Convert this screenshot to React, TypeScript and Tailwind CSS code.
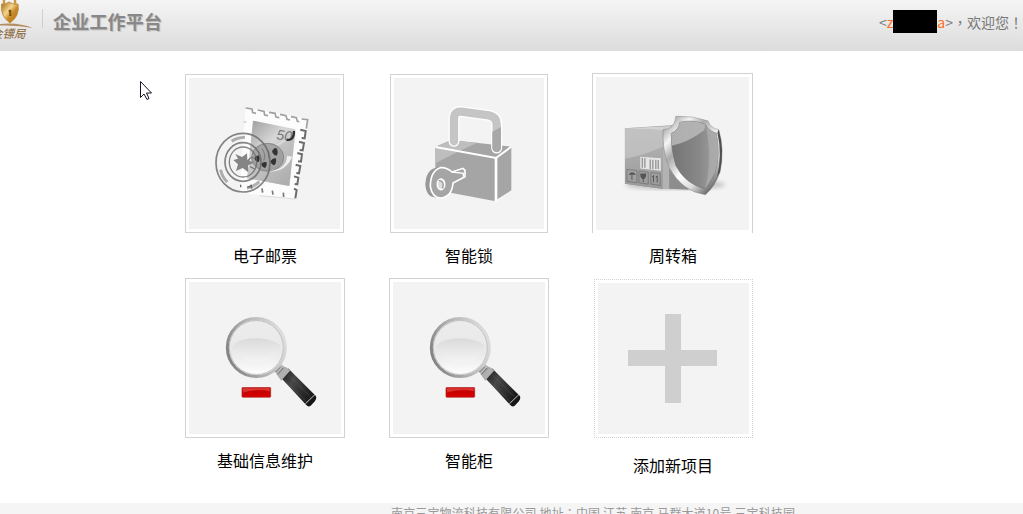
import React from "react";

const Stamp = () => (
  <svg viewBox="0 0 453 453" className="block h-full w-full">
    <defs>
      <linearGradient id="stampFill" x1="0" y1="0" x2=".7" y2="1">
        <stop offset="0" stopColor="#999" />
        <stop offset=".45" stopColor="#d8d8d8" />
        <stop offset="1" stopColor="#a2a2a2" />
      </linearGradient>
    </defs>
    <g transform="translate(-28,-29)">
      <path d="M198 117L386 153L350 392L180 374Z" fill="#fcfcfc" />
      <path d="M198 119l19 3 2 11 10 2M234 125l19 4 2 11 10 2M268 132l18 3 3 11 10 2M301 138l18 4 3 11 9 2M334 145l16 3 3 11 6 1M366 152l18 2-4 27" fill="none" stroke="#a0a0a0" strokeWidth="5" />
      <path d="M192 161h8" stroke="#c5c5c5" strokeWidth="4" />
      <path d="M362 184l16 4-3 22-9-1M358 220l15 4-4 22-9-1M353 254l14 4-3 22-9-1M348 289l14 4-4 22-8-1M343 324l13 4-3 20-8-1M343 361l8 4-4 25" fill="none" stroke="#6c6c6c" strokeWidth="6" />
      <path d="M240 382l107 10" stroke="#cfcfcf" strokeWidth="2" />
      <path d="M247 360l2 13M278 367l2 12M311 373l1 13M214 349l2 12" stroke="#777" strokeWidth="5" />
      <path d="M220 157L347 183L329 353L202 330Z" fill="url(#stampFill)" />
      <path d="M215 270q50 0 133-76l-19 159-127-23Z" fill="#bcbcbc" opacity=".5" />
      <path d="M265 240Q305 230 346 193" fill="none" stroke="#eee" strokeWidth="2" />
      <text x="289" y="213" transform="rotate(7 289 213)" fontFamily="Liberation Sans" fontStyle="italic" fontSize="42" fill="#777">50</text>
      <path d="M321 214q22 4 22-26" fill="none" stroke="#303030" strokeWidth="7" />
      <ellipse cx="264" cy="267" rx="48" ry="42" fill="#999" opacity=".8" />
      <ellipse cx="264" cy="267" rx="48" ry="42" fill="none" stroke="#888" strokeWidth="3" />
      <path d="M322 262q0 42-59 47 54 4 75-44Z" fill="#f0f0f0" />
      <g fill="#333"><path d="M277 250q3-10 13-11 7 10 2 22-7 3-15-11zM272 279q5-9 16-10 4 11-3 21-8 2-13-11zM245 288q4-9 15-7 4 9-4 18-8-1-11-11zM224 269q6-8 13-8 6 10 0 20-9 1-13-12z" /></g>
      <path d="M247 241q13 18 5 36M263 245q8 9 4 24" fill="none" stroke="#777" strokeWidth="3" />
      <g fill="none" stroke="#666">
        <ellipse cx="190" cy="283" rx="81" ry="88" strokeWidth="5" opacity=".8" />
        <ellipse cx="190" cy="281" rx="54" ry="58" strokeWidth="5" opacity=".8" />
        <ellipse cx="190" cy="281" rx="41" ry="45" strokeWidth="4" opacity=".8" />
        <path d="M156 219q16-11 40-12M123 304q4 22 20 37M202 359q21-3 37-19" strokeWidth="9" opacity=".5" />
        <path d="M203 357l12-4M183 349v8" strokeWidth="4" />
      </g>
      <path d="M167 257l20 9 15-11 1 19 20 9-18 8 1 21-17-13-20 9 6-20-14-13 14-4Z" fill="#858585" />
      <path d="M204 278q10-14 18-10M211 295l14 7" fill="none" stroke="#777" strokeWidth="4" />
    </g>
  </svg>
);

const Lock = () => (
  <svg viewBox="0 0 450 453" className="block h-full w-full">
    <g transform="translate(-30,-29)">
      <path d="M154 235L202 215L382 235V366L331 398L200 373L154 340Z" fill="#a5a5a5" />
      <path d="M154 236L202 217L280 223Q230 245 154 285Z" fill="#bebebe" />
      <path d="M154 236L336 269L382 235" fill="none" stroke="#fff" strokeWidth="6" />
      <path d="M336 269V399" stroke="#fff" strokeWidth="8" />
      <path d="M210 219V149Q212 128 232 130L315 141Q338 146 338 168V239" fill="none" stroke="#fff" strokeWidth="33" strokeLinecap="round" />
      <path d="M210 219V149Q212 128 232 130L315 141Q338 146 338 168V239" fill="none" stroke="#c5c5c5" strokeWidth="25" strokeLinecap="round" />
      <path d="M325 190L351 176V238A13 13 0 0 1 325 238Z" fill="#a8a8a8" />
      <path d="M164 297Q126 300 124 348Q126 388 158 388" fill="#989898" />
      <path d="M169 298Q187 296 204 311L237 300L243 306V325L207 344Q204 384 171 389Q145 390 139 355Q139 308 169 298Z" fill="#a5a5a5" stroke="#fff" strokeWidth="5" />
      <ellipse cx="171" cy="348" rx="11" ry="16" fill="#ddd" stroke="#fff" strokeWidth="5" />
      <path d="M164 336q19 3 12 25" fill="none" stroke="#999" strokeWidth="4" />
      <path d="M204 311l34 4v10" stroke="#fff" strokeWidth="4" fill="none" />
    </g>
  </svg>
);

const ShieldBox = () => (
  <svg viewBox="0 0 460 460" className="block h-full w-full">
    <defs>
      <linearGradient id="boxFace" x2="0" y2="1"><stop stopColor="#b8b8b8" /><stop offset="1" stopColor="#999" /></linearGradient>
      <linearGradient id="rim" x2=".8" y2="1"><stop stopColor="#777" /><stop offset=".24" stopColor="#f5f5f5" /><stop offset=".38" stopColor="#aaa" /><stop offset=".6" stopColor="#fff" /><stop offset=".78" stopColor="#ddd" /><stop offset="1" stopColor="#555" /></linearGradient>
      <linearGradient id="shieldFace" x2="1"><stop stopColor="#747474" /><stop offset=".6" stopColor="#888" /><stop offset="1" stopColor="#a3a3a3" /></linearGradient>
      <filter id="soft"><feGaussianBlur stdDeviation="6" /></filter>
    </defs>
    <g transform="translate(-30,-26)">
      <ellipse cx="268" cy="350" rx="150" ry="15" fill="#777" opacity=".4" filter="url(#soft)" />
      <path d="M117 180L260 171L290 363L235 363L117 347Z" fill="#989898" />
      <path d="M117 180L231 186V363L117 347Z" fill="url(#boxFace)" />
      <path d="M117 180L231 186V235Q180 260 117 272Z" fill="#c6c6c6" opacity=".7" />
      <path d="M117 180L255 173L262 180L231 186Z" fill="#d2d2d2" />
      <path d="M231 186L270 180V363L231 363Z" fill="#b3b3b3" />
      <path d="M250 290L310 365L250 362Z" fill="#8d8d8d" />
      <path d="M163 266L225 270V308L163 301Z" fill="#e6e6e6" />
      <path d="M169 269v30M177 270v29M193 274v29M201 275v28M210 275v28M217 276v27" stroke="#777" strokeWidth="3" />
      <g fill="none" stroke="#696969" strokeWidth="2"><path d="M123 304l30 3v37l-30-4zM159 309l28 3v36l-28-4zM195 313l28 3v36l-28-4z" /></g>
      <path d="M128 320q10-15 22 0zM163 316h18q0 17-9 17-9 0-9-17z" fill="#555" />
      <path d="M138 320v15M172 330v12M203 342v-20l-4 5M214 343v-20l-4 5" stroke="#555" strokeWidth="3" fill="none" />
      <path d="M270 144Q320 142 367 158Q375 181 399 184Q417 245 403 311Q389 354 359 380Q290 371 250 299Q228 245 232 184Q267 183 270 144Z" fill="url(#rim)" stroke="#888" strokeWidth="1.5" />
      <path d="M399 184Q417 245 403 311L394 327Q410 260 395 193Z" fill="#505050" />
      <path d="M282 162Q324 153 359 169Q369 190 392 195Q405 263 387 315Q374 348 358 362Q299 348 270 292Q255 244 256 195Q278 188 282 162Z" fill="url(#shieldFace)" stroke="#777" strokeWidth="2" />
      <path d="M282 162Q324 153 359 169L356 185Q310 221 258 233L256 195Q278 188 282 162Z" fill="#bababa" opacity=".85" />
      <path d="M359 169Q369 190 392 195Q405 263 387 315L358 362Q382 270 359 169Z" fill="#b0b0b0" opacity=".65" />
    </g>
  </svg>
);

const Magnifier = () => (
  <svg viewBox="0 0 456 453" className="block h-full w-full">
    <defs>
      <linearGradient id="lensRim" x1="0" y1=".7" x2="1" y2=".35"><stop stopColor="#808080" /><stop offset=".45" stopColor="#b0b0b0" /><stop offset="1" stopColor="#dedede" /></linearGradient>
      <linearGradient id="lens" x2="0" y2="1"><stop stopColor="#ececec" /><stop offset=".6" stopColor="#e9e9e9" /><stop offset="1" stopColor="#fff" /></linearGradient>
      <linearGradient id="glare" x2="0" y2="1"><stop stopColor="#dadada" /><stop offset="1" stopColor="#f5f5f5" /></linearGradient>
      <linearGradient id="handle" x2="1" y2=".6"><stop stopColor="#111" /><stop offset=".4" stopColor="#484848" /><stop offset="1" stopColor="#161616" /></linearGradient>
      <linearGradient id="red" x2="0" y2="1"><stop stopColor="#d6231f" /><stop offset=".45" stopColor="#c60000" /><stop offset="1" stopColor="#d00" /></linearGradient>
    </defs>
    <g transform="translate(-27,-30)">
      <path d="M281 293l20-20 26 20-25 27z" fill="#b8b8b8" />
      <path d="M286 299l15-15M292 306l18-20" stroke="#666" strokeWidth="3" />
      <circle cx="229" cy="225" r="87" fill="url(#lens)" stroke="url(#lensRim)" strokeWidth="9" />
      <circle cx="229" cy="225" r="81" fill="none" stroke="#aaa" strokeWidth="2" />
      <path d="M155 222Q175 197 229 197Q285 199 303 222Q294 262 229 270Q163 260 155 222Z" fill="url(#glare)" />
      <path d="M300 313L325 288L407 370Q412 377 404 387L392 400Q385 405 378 397Z" fill="url(#handle)" />
      <path d="M294 309L316 284L331 293L304 324Z" fill="#b0b0b0" stroke="#888" strokeWidth="1" />
      <path d="M314 323l66 66M327 309l68 68" stroke="#777" strokeWidth="2" strokeDasharray="2 3" />
      <path d="M376 394l29-28" stroke="#c8c8c8" strokeWidth="3" />
      <rect x="186" y="345" width="86" height="29" rx="2" fill="url(#red)" stroke="#a5201c" strokeWidth="2" />
      <path d="M189 348h80v8q-40-10-80 5z" fill="#ef6864" opacity=".4" />
    </g>
  </svg>
);

const Plus = () => (
  <svg viewBox="0 0 151 151" className="block h-full w-full">
    <path d="M67 31h16v36h36v16H83v37H67V83H30V67h37z" fill="#cfcfcf" />
  </svg>
);

type Tile = { label: string; icon: React.ReactNode; cell: string; frame: string; text: string };

const tiles: Tile[] = [
  { label: "电子邮票", icon: <Stamp />, cell: "pt-[1px]", frame: "ml-[22px] h-[159px] w-[159px] border", text: "mt-[10px]" },
  { label: "智能锁", icon: <Lock />, cell: "pt-[1px]", frame: "ml-[23px] h-[159px] w-[158px] border", text: "mt-[10px]" },
  { label: "周转箱", icon: <ShieldBox />, cell: "", frame: "ml-[21px] h-[160px] w-[161px] border border-b-0", text: "mt-[10px]" },
  { label: "基础信息维护", icon: <Magnifier />, cell: "", frame: "ml-[22px] h-[160px] w-[160px] border", text: "mt-[10px]" },
  { label: "智能柜", icon: <Magnifier />, cell: "", frame: "ml-[22px] h-[160px] w-[160px] border", text: "mt-[10px]" },
  { label: "添加新项目", icon: <Plus />, cell: "pt-[1px]", frame: "ml-[23px] h-[159px] w-[159px] border border-dotted", text: "mt-[15px]" },
];

const Logo = () => (
  <svg viewBox="0 0 42 51" className="h-[51px] w-[42px] shrink-0">
    <defs><linearGradient id="gold" x2="1" y2="1"><stop stopColor="#9b5d10" /><stop offset=".4" stopColor="#f5d68c" /><stop offset=".6" stopColor="#c78a2a" /><stop offset="1" stopColor="#b87512" /></linearGradient></defs>
    <path d="M4 5V0M15 5V0" stroke="#c99a4a" strokeWidth="2.5" />
    <path d="M1.500 4Q5 5 9 2Q13 5 18 4Q20 16 10 23Q0 16 1.500 4Z" fill="url(#gold)" stroke="#c0903e" />
    <circle cx="10" cy="11" r="1.500" fill="#80500f" />
    <path d="M9.500 11h1.500l.5 5h-2.500z" fill="#80500f" />
    <path d="M0 24Q18 22 33 28Q18 25 0 25.500Z" fill="#b48d62" />
    <text x="-9" y="38" fontFamily="Noto Sans CJK SC, sans-serif" fontStyle="italic" fontSize="11.500" fill="#86602f">金镖局</text>
  </svg>
);

export default function App() {
  return (
    <div className="relative flex h-[514px] w-[1023px] flex-col overflow-hidden bg-white font-['Noto_Sans_CJK_SC',sans-serif]">
      <header className="flex h-[51px] shrink-0 items-start bg-linear-to-b from-[#f5f5f5] to-[#dcdcdc]">
        <Logo />
        <div className="mt-[9px] h-[19px] w-px bg-[#cfcfcf]" />
        <h1 className="ml-[10px] mt-[7px] text-[18px] leading-[28px] font-bold tracking-[0.2px] text-[#888] [text-shadow:1px_1px_1px_#bbb]">企业工作平台</h1>
        <div className="ml-auto mt-[10px] flex h-[23px] items-center text-[14px] leading-[22px] whitespace-nowrap text-[#777]">
          <span>&lt;</span><span className="text-[#ff6c22]">z</span>
          <span className="h-[23px] w-[44px] bg-black" />
          <span className="text-[#ff6c22]">a</span><span>&gt;</span>
          <span className="font-['Noto_Sans_CJK_TC',sans-serif]" lang="zh-TW">，</span>
          <span>欢迎您</span>
          <span className="font-['Noto_Sans_CJK_TC',sans-serif]" lang="zh-TW">！</span>
        </div>
      </header>
      <main className="ml-[163px] grid h-[452px] w-[612px] shrink-0 grid-cols-3 grid-rows-[205px_205px] pt-[22px]">
        {tiles.map((t) => (
          <section key={t.label} className={t.cell}>
            <div className={`${t.frame} border-[#d2d2d2] p-[3px]`}><div className="h-full w-full bg-[#f3f3f3]">{t.icon}</div></div>
            <h2 className={`${t.text} text-center text-[16px] leading-[24px] text-black`}>{t.label}</h2>
          </section>
        ))}
      </main>
      <footer className="h-[11px] shrink-0 overflow-hidden bg-[#f5f5f5] pl-[391px] text-[12px] leading-[20px] tracking-[0.14px] whitespace-nowrap text-[#999]">
        南京三宝物流科技有限公司 地址<span className="font-['Noto_Sans_CJK_TC',sans-serif]" lang="zh-TW">：</span>中国 江苏 南京 马群大道10号 三宝科技园
      </footer>
      <svg viewBox="0 0 14 20" className="absolute left-[140px] top-[81px] h-[20px] w-[14px]"><path d="M.5.5V16.5L4 13L7 18.5L9 17.5L6.5 12H11.5Z" fill="#fff" stroke="#161329" /></svg>
    </div>
  );
}
